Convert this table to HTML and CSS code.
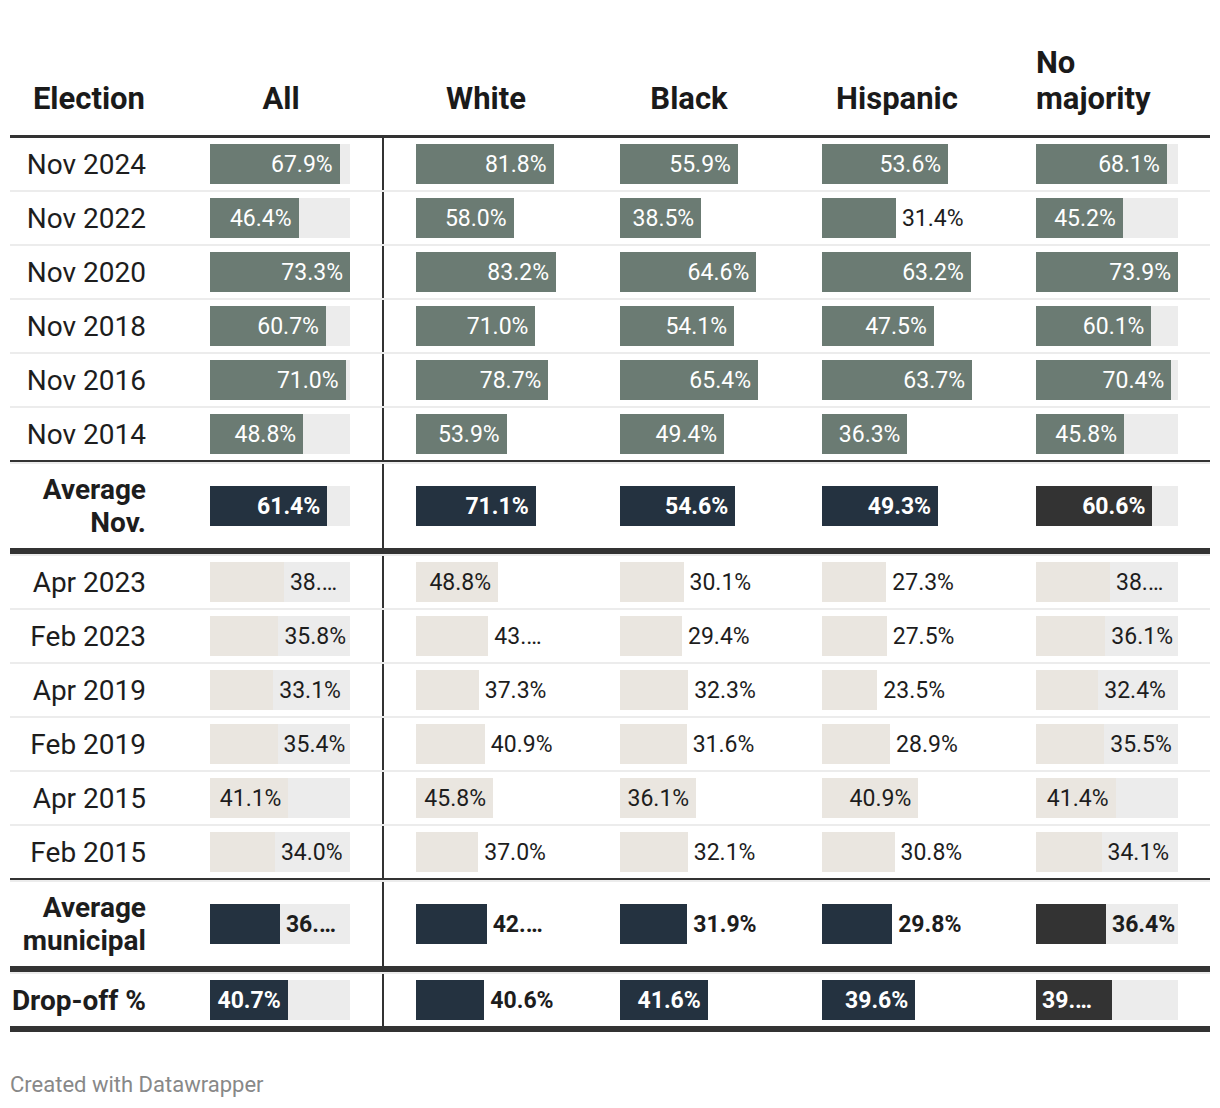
FILE: index.html
```html
<!DOCTYPE html>
<html lang="en">
<head>
<meta charset="utf-8">
<title>Turnout by election</title>
<link rel="stylesheet" href="styles.css">
</head>
<body>
<div class="chart">
  <div class="row row--head">
    <div class="th th--label">Election</div>
    <div class="th">All</div>
    <div class="th">White</div>
    <div class="th">Black</div>
    <div class="th">Hispanic</div>
    <div class="th th--left">No majority</div>
  </div>

  <div class="row row--body">
    <div class="label">Nov 2024</div>
    <div class="bar bar--divider"><div class="track track--bg"><div class="fill fill--sage" style="width:92.63%"><span class="val val--in">67.9%</span></div></div></div>
    <div class="bar"><div class="track"><div class="fill fill--sage" style="width:98.32%"><span class="val val--in">81.8%</span></div></div></div>
    <div class="bar"><div class="track"><div class="fill fill--sage" style="width:85.47%"><span class="val val--in">55.9%</span></div></div></div>
    <div class="bar"><div class="track"><div class="fill fill--sage" style="width:84.14%"><span class="val val--in">53.6%</span></div></div></div>
    <div class="bar"><div class="track track--bg"><div class="fill fill--sage" style="width:92.15%"><span class="val val--in">68.1%</span></div></div></div>
  </div>
  <div class="row row--body">
    <div class="label">Nov 2022</div>
    <div class="bar bar--divider"><div class="track track--bg"><div class="fill fill--sage" style="width:63.30%"><span class="val val--in">46.4%</span></div></div></div>
    <div class="bar"><div class="track"><div class="fill fill--sage" style="width:69.71%"><span class="val val--in">58.0%</span></div></div></div>
    <div class="bar"><div class="track"><div class="fill fill--sage" style="width:58.87%"><span class="val val--in">38.5%</span></div></div></div>
    <div class="bar"><div class="track"><div class="fill fill--sage" style="width:49.29%"></div><span class="val val--out">31.4%</span></div></div>
    <div class="bar"><div class="track track--bg"><div class="fill fill--sage" style="width:61.16%"><span class="val val--in">45.2%</span></div></div></div>
  </div>
  <div class="row row--body">
    <div class="label">Nov 2020</div>
    <div class="bar bar--divider"><div class="track track--bg"><div class="fill fill--sage" style="width:100%"><span class="val val--in">73.3%</span></div></div></div>
    <div class="bar"><div class="track"><div class="fill fill--sage" style="width:100%"><span class="val val--in">83.2%</span></div></div></div>
    <div class="bar"><div class="track"><div class="fill fill--sage" style="width:98.78%"><span class="val val--in">64.6%</span></div></div></div>
    <div class="bar"><div class="track"><div class="fill fill--sage" style="width:99.22%"><span class="val val--in">63.2%</span></div></div></div>
    <div class="bar"><div class="track track--bg"><div class="fill fill--sage" style="width:100%"><span class="val val--in">73.9%</span></div></div></div>
  </div>
  <div class="row row--body">
    <div class="label">Nov 2018</div>
    <div class="bar bar--divider"><div class="track track--bg"><div class="fill fill--sage" style="width:82.81%"><span class="val val--in">60.7%</span></div></div></div>
    <div class="bar"><div class="track"><div class="fill fill--sage" style="width:85.34%"><span class="val val--in">71.0%</span></div></div></div>
    <div class="bar"><div class="track"><div class="fill fill--sage" style="width:82.72%"><span class="val val--in">54.1%</span></div></div></div>
    <div class="bar"><div class="track"><div class="fill fill--sage" style="width:74.57%"><span class="val val--in">47.5%</span></div></div></div>
    <div class="bar"><div class="track track--bg"><div class="fill fill--sage" style="width:81.33%"><span class="val val--in">60.1%</span></div></div></div>
  </div>
  <div class="row row--body">
    <div class="label">Nov 2016</div>
    <div class="bar bar--divider"><div class="track track--bg"><div class="fill fill--sage" style="width:96.86%"><span class="val val--in">71.0%</span></div></div></div>
    <div class="bar"><div class="track"><div class="fill fill--sage" style="width:94.59%"><span class="val val--in">78.7%</span></div></div></div>
    <div class="bar"><div class="track"><div class="fill fill--sage" style="width:100%"><span class="val val--in">65.4%</span></div></div></div>
    <div class="bar"><div class="track"><div class="fill fill--sage" style="width:100%"><span class="val val--in">63.7%</span></div></div></div>
    <div class="bar"><div class="track track--bg"><div class="fill fill--sage" style="width:95.26%"><span class="val val--in">70.4%</span></div></div></div>
  </div>
  <div class="row row--body row--last">
    <div class="label">Nov 2014</div>
    <div class="bar bar--divider"><div class="track track--bg"><div class="fill fill--sage" style="width:66.58%"><span class="val val--in">48.8%</span></div></div></div>
    <div class="bar"><div class="track"><div class="fill fill--sage" style="width:64.78%"><span class="val val--in">53.9%</span></div></div></div>
    <div class="bar"><div class="track"><div class="fill fill--sage" style="width:75.54%"><span class="val val--in">49.4%</span></div></div></div>
    <div class="bar"><div class="track"><div class="fill fill--sage" style="width:56.99%"><span class="val val--in">36.3%</span></div></div></div>
    <div class="bar"><div class="track track--bg"><div class="fill fill--sage" style="width:61.98%"><span class="val val--in">45.8%</span></div></div></div>
  </div>

  <div class="sep sep--thin"></div>

  <div class="row row--avg">
    <div class="label label--bold">Average Nov.</div>
    <div class="bar bar--divider"><div class="track track--bg"><div class="fill fill--navy" style="width:83.77%"><span class="val val--in val--bold">61.4%</span></div></div></div>
    <div class="bar"><div class="track"><div class="fill fill--navy" style="width:85.46%"><span class="val val--in val--bold">71.1%</span></div></div></div>
    <div class="bar"><div class="track"><div class="fill fill--navy" style="width:83.49%"><span class="val val--in val--bold">54.6%</span></div></div></div>
    <div class="bar"><div class="track"><div class="fill fill--navy" style="width:77.39%"><span class="val val--in val--bold">49.3%</span></div></div></div>
    <div class="bar"><div class="track track--bg"><div class="fill fill--dark" style="width:82.00%"><span class="val val--in val--bold">60.6%</span></div></div></div>
  </div>

  <div class="sep sep--thick"></div>

  <div class="row row--body">
    <div class="label">Apr 2023</div>
    <div class="bar bar--divider"><div class="track track--bg"><div class="fill fill--beige" style="width:52.80%"></div><span class="val val--out">38.…</span></div></div>
    <div class="bar"><div class="track"><div class="fill fill--beige" style="width:58.65%"><span class="val val--in">48.8%</span></div></div></div>
    <div class="bar"><div class="track"><div class="fill fill--beige" style="width:46.02%"></div><span class="val val--out">30.1%</span></div></div>
    <div class="bar"><div class="track"><div class="fill fill--beige" style="width:42.86%"></div><span class="val val--out">27.3%</span></div></div>
    <div class="bar"><div class="track track--bg"><div class="fill fill--beige" style="width:52.10%"></div><span class="val val--out">38.…</span></div></div>
  </div>
  <div class="row row--body">
    <div class="label">Feb 2023</div>
    <div class="bar bar--divider"><div class="track track--bg"><div class="fill fill--beige" style="width:48.84%"></div><span class="val val--out">35.8%</span></div></div>
    <div class="bar"><div class="track"><div class="fill fill--beige" style="width:51.68%"></div><span class="val val--out">43.…</span></div></div>
    <div class="bar"><div class="track"><div class="fill fill--beige" style="width:44.95%"></div><span class="val val--out">29.4%</span></div></div>
    <div class="bar"><div class="track"><div class="fill fill--beige" style="width:43.17%"></div><span class="val val--out">27.5%</span></div></div>
    <div class="bar"><div class="track track--bg"><div class="fill fill--beige" style="width:48.85%"></div><span class="val val--out">36.1%</span></div></div>
  </div>
  <div class="row row--body">
    <div class="label">Apr 2019</div>
    <div class="bar bar--divider"><div class="track track--bg"><div class="fill fill--beige" style="width:45.16%"></div><span class="val val--out">33.1%</span></div></div>
    <div class="bar"><div class="track"><div class="fill fill--beige" style="width:44.83%"></div><span class="val val--out">37.3%</span></div></div>
    <div class="bar"><div class="track"><div class="fill fill--beige" style="width:49.39%"></div><span class="val val--out">32.3%</span></div></div>
    <div class="bar"><div class="track"><div class="fill fill--beige" style="width:36.89%"></div><span class="val val--out">23.5%</span></div></div>
    <div class="bar"><div class="track track--bg"><div class="fill fill--beige" style="width:43.84%"></div><span class="val val--out">32.4%</span></div></div>
  </div>
  <div class="row row--body">
    <div class="label">Feb 2019</div>
    <div class="bar bar--divider"><div class="track track--bg"><div class="fill fill--beige" style="width:48.29%"></div><span class="val val--out">35.4%</span></div></div>
    <div class="bar"><div class="track"><div class="fill fill--beige" style="width:49.16%"></div><span class="val val--out">40.9%</span></div></div>
    <div class="bar"><div class="track"><div class="fill fill--beige" style="width:48.32%"></div><span class="val val--out">31.6%</span></div></div>
    <div class="bar"><div class="track"><div class="fill fill--beige" style="width:45.37%"></div><span class="val val--out">28.9%</span></div></div>
    <div class="bar"><div class="track track--bg"><div class="fill fill--beige" style="width:48.04%"></div><span class="val val--out">35.5%</span></div></div>
  </div>
  <div class="row row--body">
    <div class="label">Apr 2015</div>
    <div class="bar bar--divider"><div class="track track--bg"><div class="fill fill--beige" style="width:56.07%"><span class="val val--in">41.1%</span></div></div></div>
    <div class="bar"><div class="track"><div class="fill fill--beige" style="width:55.05%"><span class="val val--in">45.8%</span></div></div></div>
    <div class="bar"><div class="track"><div class="fill fill--beige" style="width:55.20%"><span class="val val--in">36.1%</span></div></div></div>
    <div class="bar"><div class="track"><div class="fill fill--beige" style="width:64.21%"><span class="val val--in">40.9%</span></div></div></div>
    <div class="bar"><div class="track track--bg"><div class="fill fill--beige" style="width:56.02%"><span class="val val--in">41.4%</span></div></div></div>
  </div>
  <div class="row row--body row--last">
    <div class="label">Feb 2015</div>
    <div class="bar bar--divider"><div class="track track--bg"><div class="fill fill--beige" style="width:46.38%"></div><span class="val val--out">34.0%</span></div></div>
    <div class="bar"><div class="track"><div class="fill fill--beige" style="width:44.47%"></div><span class="val val--out">37.0%</span></div></div>
    <div class="bar"><div class="track"><div class="fill fill--beige" style="width:49.08%"></div><span class="val val--out">32.1%</span></div></div>
    <div class="bar"><div class="track"><div class="fill fill--beige" style="width:48.35%"></div><span class="val val--out">30.8%</span></div></div>
    <div class="bar"><div class="track track--bg"><div class="fill fill--beige" style="width:46.14%"></div><span class="val val--out">34.1%</span></div></div>
  </div>

  <div class="sep sep--thin"></div>

  <div class="row row--avg">
    <div class="label label--bold">Average municipal</div>
    <div class="bar bar--divider"><div class="track track--bg"><div class="fill fill--navy" style="width:49.93%"></div><span class="val val--out val--bold">36.…</span></div></div>
    <div class="bar"><div class="track"><div class="fill fill--navy" style="width:50.48%"></div><span class="val val--out val--bold">42.…</span></div></div>
    <div class="bar"><div class="track"><div class="fill fill--navy" style="width:48.78%"></div><span class="val val--out val--bold">31.9%</span></div></div>
    <div class="bar"><div class="track"><div class="fill fill--navy" style="width:46.78%"></div><span class="val val--out val--bold">29.8%</span></div></div>
    <div class="bar"><div class="track track--bg"><div class="fill fill--dark" style="width:49.26%"></div><span class="val val--out val--bold">36.4%</span></div></div>
  </div>

  <div class="sep sep--thick"></div>

  <div class="row row--drop">
    <div class="label label--bold label--nowrap">Drop-off %</div>
    <div class="bar bar--divider"><div class="track track--bg"><div class="fill fill--navy" style="width:55.53%"><span class="val val--in val--bold">40.7%</span></div></div></div>
    <div class="bar"><div class="track"><div class="fill fill--navy" style="width:48.80%"></div><span class="val val--out val--bold">40.6%</span></div></div>
    <div class="bar"><div class="track"><div class="fill fill--navy" style="width:63.61%"><span class="val val--in val--bold">41.6%</span></div></div></div>
    <div class="bar"><div class="track"><div class="fill fill--navy" style="width:62.17%"><span class="val val--in val--bold">39.6%</span></div></div></div>
    <div class="bar"><div class="track track--bg"><div class="fill fill--dark fill--start" style="width:53.32%"><span class="val val--in val--bold">39.…</span></div></div></div>
  </div>
</div>
<p class="footer">Created with Datawrapper</p>
</body>
</html>
```

FILE: styles.css
```css
* {
  box-sizing: border-box;
}

body {
  margin: 0;
  background: #ffffff;
  font-family: Roboto, "Liberation Sans", sans-serif;
  color: #1d1d1d;
}

.chart {
  width: 1200px;
  margin-left: 10px;
}

.row {
  display: grid;
  grid-template-columns: 168px 206px 204px 202px 214px 206px;
}

.row--head {
  height: 138px;
  align-items: end;
  border-bottom: 3px solid #333333;
}

.th {
  font-size: 31px;
  font-weight: 700;
  line-height: 36px;
  padding: 0 32px 18px;
  text-align: center;
  color: #1a1a1a;
}

.th--label {
  text-align: right;
  padding-left: 0;
  padding-right: 33px;
}

.th--left {
  text-align: left;
}

.row--body {
  height: 54px;
  border-bottom: 2px solid #ececec;
}

.row--last {
  height: 52px;
  border-bottom: none;
}

.row--avg {
  height: 84px;
}

.row--drop {
  height: 58px;
  border-bottom: 6px solid #333333;
}

.sep {
  background: #333333;
  border-bottom: 2px solid #ececec;
}

.sep--thin {
  height: 4px;
}

.sep--thick {
  height: 8px;
}

.label {
  font-size: 28px;
  text-align: right;
  padding-right: 32px;
  display: flex;
  align-items: center;
  justify-content: flex-end;
}

.label--bold {
  font-weight: 700;
}

.label--nowrap {
  white-space: nowrap;
}

.bar {
  padding: 0 32px;
  display: flex;
  align-items: center;
}

.bar--divider {
  border-right: 2px solid #333333;
}

.track {
  width: 100%;
  height: 40px;
  display: flex;
  align-items: center;
  overflow: hidden;
}

.track--bg {
  background: #ececec;
}

.fill {
  height: 100%;
  flex: none;
  display: flex;
  align-items: center;
  justify-content: flex-end;
  overflow: hidden;
}

.fill--sage {
  background: #6b7b73;
  color: #ffffff;
}

.fill--navy {
  background: #243240;
  color: #ffffff;
}

.fill--dark {
  background: #333333;
  color: #ffffff;
}

.fill--beige {
  background: #eae6e0;
  color: #1d1d1d;
}

.fill--start {
  justify-content: flex-start;
}

.val {
  font-size: 23px;
  white-space: nowrap;
}

.val--in {
  padding-right: 7px;
}

.fill--start .val--in {
  padding: 0 0 0 6px;
}

.val--out {
  padding-left: 6px;
  color: #1d1d1d;
  overflow: hidden;
  min-width: 0;
}

.val--bold {
  font-weight: 700;
}

.footer {
  margin: 0 0 0 10px;
  padding-top: 40px;
  font-size: 22px;
  color: #888888;
}
```
